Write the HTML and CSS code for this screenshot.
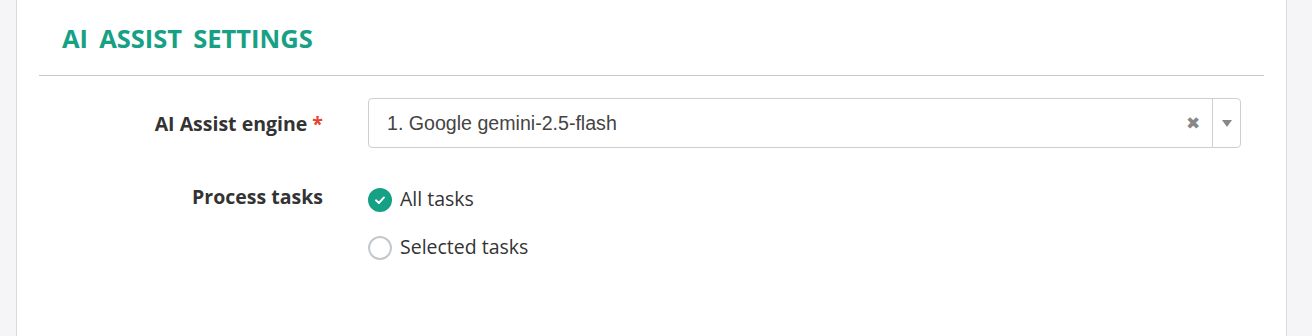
FILE: index.html
```html
<!DOCTYPE html>
<html lang="en">
<head>
  <meta charset="UTF-8">
  <title>AI Assist Settings</title>
  <link rel="stylesheet" href="styles.css">
</head>
<body>

  <div class="panel">
    <div class="panel-header">
      <h2>AI Assist Settings</h2>
    </div>

    <div class="form-body">
      <div class="form-row row-engine">
        <label class="form-label">AI Assist engine <span class="required">*</span></label>
        <div class="select-box">
          <span class="select-value">1. Google gemini-2.5-flash</span>
          <span class="select-clear">&#x2716;</span>
          <span class="select-arrow"><span class="caret"></span></span>
        </div>
      </div>

      <div class="form-row row-tasks">
        <label class="form-label label-top">Process tasks</label>
        <div class="radio-list">
          <div class="radio-option">
            <span class="radio checked">
              <svg width="14" height="14" viewBox="0 0 14 14"><path d="M3 7.3 L5.9 10 L11 4.4" fill="none" stroke="#fff" stroke-width="1.9" stroke-linecap="round" stroke-linejoin="round"/></svg>
            </span>
            <span class="radio-text">All tasks</span>
          </div>
          <div class="radio-option">
            <span class="radio"></span>
            <span class="radio-text">Selected tasks</span>
          </div>
        </div>
      </div>
    </div>
  </div>

</body>
</html>
```

FILE: styles.css
```css
html, body {
  height: 100%;
}

body {
  margin: 0;
  padding: 0 25px 0 16px;
  background-color: #f5f5f7;
  font-family: 'Open Sans', 'Liberation Sans', sans-serif;
  color: #333;
  overflow: hidden;
}

.panel {
  background-color: #fff;
  border-left: 1px solid #d9d9de;
  border-right: 1px solid #d9d9de;
  min-height: 100%;
  box-sizing: border-box;
}

.panel-header {
  margin: 0 22px;
  padding: 20px 0 19px 23px;
  border-bottom: 1px solid #c8c8c8;
}

h2 {
  margin: 0;
  font-size: 25.5px;
  line-height: 36px;
  font-weight: 700;
  text-transform: uppercase;
  color: #16a085;
  word-spacing: 4.5px;
}

.form-body {
  padding: 22px 45px 0 0;
}

.form-row {
  display: grid;
  grid-template-columns: 306px 1fr;
  column-gap: 45px;
}

.row-engine {
  align-items: center;
}

.row-tasks {
  margin-top: 28px;
  align-items: start;
}

.form-label {
  text-align: right;
  font-weight: 700;
  font-size: 19.5px;
  color: #333;
}

.label-top {
  padding-top: 7px;
}

.required {
  color: #e8412c;
}

.select-box {
  display: flex;
  align-items: center;
  height: 50px;
  border: 1px solid #cfcfcf;
  border-radius: 4px;
  box-sizing: border-box;
  font-family: 'Liberation Sans', Arial, sans-serif;
}

.select-value {
  flex: 1;
  padding-left: 18px;
  font-size: 19.6px;
  color: #444;
}

.select-clear {
  font-size: 17px;
  color: #888;
  padding-right: 12px;
}

.select-arrow {
  display: flex;
  align-items: center;
  justify-content: center;
  width: 27px;
  height: 100%;
  border-left: 1px solid #cfcfcf;
}

.caret {
  width: 0;
  height: 0;
  border-left: 5px solid transparent;
  border-right: 5px solid transparent;
  border-top: 7px solid #888;
}

.radio-list {
  display: flex;
  flex-direction: column;
}

.radio-option {
  display: flex;
  align-items: center;
  gap: 8px;
  height: 48px;
}

.radio {
  display: flex;
  align-items: center;
  justify-content: center;
  width: 24px;
  height: 24px;
  border: 2px solid #c3c8cc;
  border-radius: 50%;
  box-sizing: border-box;
  background-color: #fff;
}

.radio.checked {
  border-color: #16a085;
  background-color: #16a085;
}

.radio-text {
  font-size: 19.5px;
  color: #333;
  margin-top: -3px;
}
```
